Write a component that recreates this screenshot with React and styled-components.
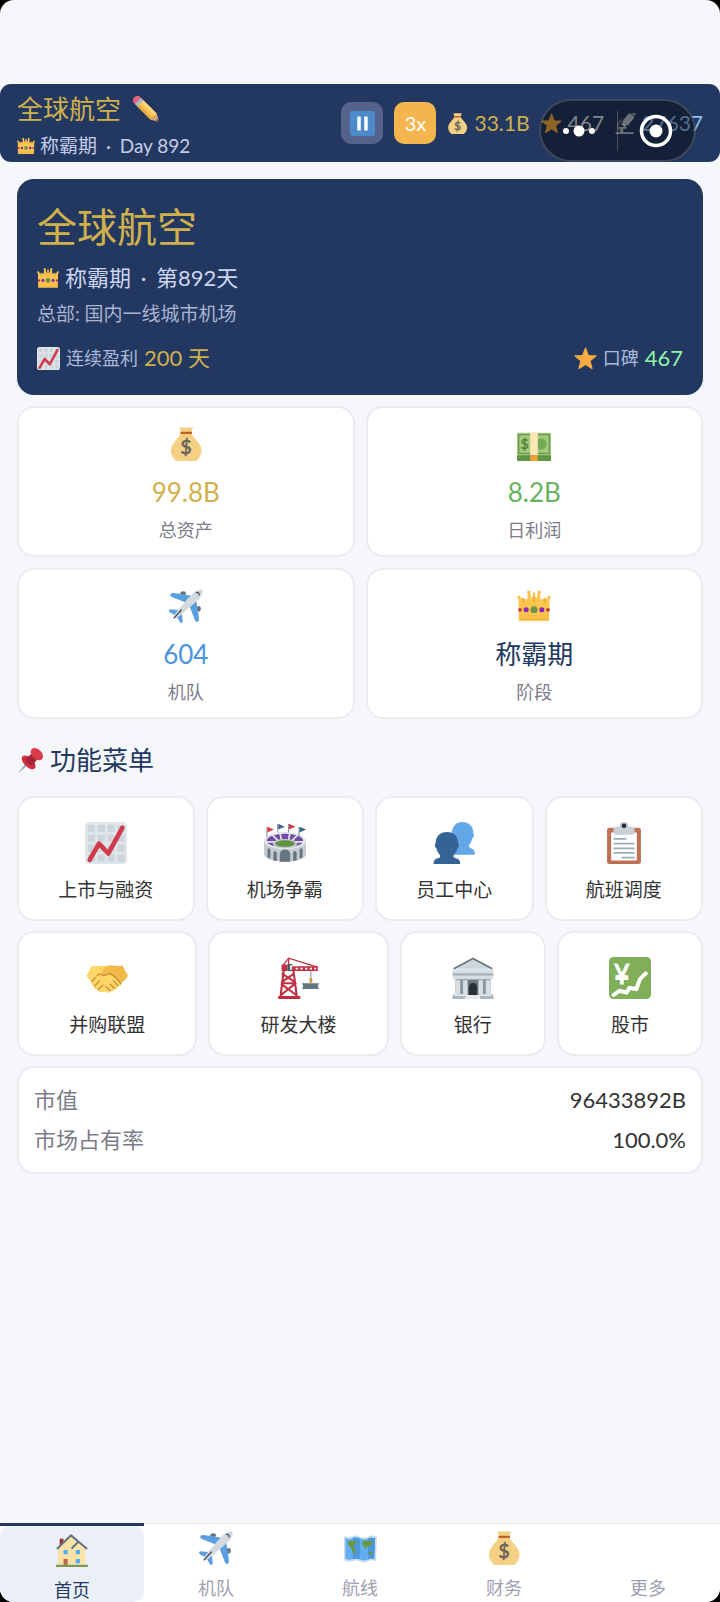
import React from "react";
import styled, { createGlobalStyle, ThemeProvider } from "styled-components";

const theme = {
  navy: "#233861",
  gold: "#cfb04c",
  page: "#f5f7fb",
  line: "#ebecf2",
  muted: "#7c7c89",
  text: "#333333",
};

const GlobalStyle = createGlobalStyle`
  *, *::before, *::after { box-sizing: border-box; }
  html { background: #000; }
  body {
    margin: 0;
    font-family: Lato, "Noto Sans CJK SC", sans-serif;
    font-size: 22px;
    color: ${theme.text};
  }
  h1, h2, p, dl, dd, dt { margin: 0; font-weight: 400; }
  button { font: inherit; color: inherit; border: 0; padding: 0; background: none; cursor: pointer; }
  a { color: inherit; text-decoration: none; }
`;

/* ---------- icons ---------- */

const Icon = styled.svg.attrs({ viewBox: "0 0 36 36", "aria-hidden": true })`
  display: block;
  flex: none;
  width: ${(p) => p.$size}px;
  height: ${(p) => p.$size}px;
`;

const Glyph = styled.text`
  font-family: Lato, sans-serif;
  text-anchor: middle;
`;

const MoneyBag = ({ size }) => (
  <Icon $size={size}>
    <path fill="#f4d083" d="M12.5 7h11c3 6 11 10.500 11 18 0 4-2 8-5.500 11H7.500C4 33 2 29 2 25 2 17.500 9.500 13 12.500 7z" />
    <path fill="#f4d083" d="M11 0l2.500 1L16 0l2.200 1L20.500 0 23 1l2.300-1-1.500 6H12.500z" />
    <rect x="12" y="5" width="12.500" height="2.500" rx="1" fill="#c2602c" />
    <Glyph x="18" y="29" fontSize="21" fill="#67635b" stroke="#67635b" strokeWidth=".6">$</Glyph>
  </Icon>
);

const Cash = ({ size }) => (
  <Icon $size={size}>
    <g transform="translate(0 3)">
      <rect x="0" y="26" width="36" height="7" rx="1" fill="#5f9346" />
      <rect x="0" y="3" width="36" height="24" rx="1" fill="#a3cb7e" />
      <rect x="1.800" y="5" width="32.400" height="20" fill="none" stroke="#6a9a52" strokeWidth="1.400" />
      <circle cx="25.500" cy="15" r="6" fill="#76aa55" />
      <Glyph x="8" y="20.500" fontSize="15" fill="#4f833c" stroke="#4f833c" strokeWidth=".5">$</Glyph>
      <rect x="14" y="3" width="8" height="24" fill="#ffe8b6" />
      <rect x="14" y="27" width="8" height="6" fill="#f3a136" />
    </g>
  </Icon>
);

const Plane = ({ size }) => (
  <Icon $size={size}>
    <ellipse cx="15" cy="4.500" rx="3" ry="2.200" fill="#66757f" />
    <ellipse cx="31.500" cy="21" rx="2.200" ry="3" fill="#66757f" />
    <path fill="#5b9fe0" d="M2.500 4.500C1 5 .8 7.500 2.500 8.300L17 14l6-7L5 4.300z" />
    <path fill="#5b9fe0" d="M31.500 33.500c-.5 1.500-3 1.700-3.800 0L22 19l7-6 2.700 18z" />
    <path fill="#5b9fe0" d="M1.500 21.500c-1.800.2-1.800 2.200-.5 3L8 28.500l4-6z" />
    <path fill="#5b9fe0" d="M14.500 34.500c-.2 1.800-2.200 1.800-3 .5L7.500 28l6-4z" />
    <path fill="#d2d9df" d="M4.800 31.200c-.5-.5 1-4.500 3.200-7L26 3.800C29.500.3 34 0 35.200.8c.8 1.200.5 5.700-3 9.200L11.800 28c-2.500 2.200-6.500 3.700-7 3.200z" />
    <path fill="none" stroke="#3c484f" strokeWidth="1.300" strokeLinecap="round" d="M5.500 30.500l7.500-8.300M29 3.700c1.500-.8 3.500 1 2.900 2.800" />
  </Icon>
);

const Crown = ({ size }) => (
  <Icon $size={size}>
    <path fill="#fbc650" d="M2 34L1.500 9.500 4 9l2.500 4L9 10l2 1.500L11.500 3.500h2L16 11l1-6h2l1 6 2.500-7.500h2l.5 8 2-1.500 2.500 3L32 9l2.500.5L34 34z" />
    <g fill="#f3ad3c">
      <path d="M6.500 15l-1.700-4 1.700-2 1.700 2zM18 15l-2-5 2-3 2 3zM29.500 15l-1.700-4 1.700-2 1.700 2z" />
      <path d="M2 31h32v1.400H2zM2 28h32v.8H2z" />
    </g>
    <g fill="#f7c14d">
      <circle cx="2" cy="8.500" r="1.700" /><circle cx="12.500" cy="3.500" r="1.800" />
      <circle cx="23.500" cy="3.500" r="1.800" /><circle cx="34" cy="8.500" r="1.700" />
      <circle cx="18" cy="5" r="1.500" />
    </g>
    <circle cx="3.200" cy="22" r="2" fill="#c23a3f" /><circle cx="32.800" cy="22" r="2" fill="#c23a3f" />
    <circle cx="9.700" cy="22" r="2.700" fill="#9227b8" /><circle cx="26.300" cy="22" r="2.700" fill="#9227b8" />
    <circle cx="18" cy="22" r="3.800" fill="#6d9447" />
  </Icon>
);

const Star = ({ size }) => (
  <Icon $size={size}>
    <path fill="#f6ac42" stroke="#f6ac42" strokeWidth="2" strokeLinejoin="round" d="M18 2l4.300 11.400 12 .6-9.400 7.500 3.200 12L18 26.800 7.900 33.500l3.200-12L1.700 14l12-.6z" />
  </Icon>
);

const ChartUp = ({ size }) => (
  <Icon $size={size}>
    <rect width="36" height="36" rx="4" fill="#dfe5e9" />
    <g fill="#cdd5dc">
      {[2.5, 11, 19.5, 28].map((x) =>
        [2.5, 11, 19.5, 28].map((y) => <rect key={`${x}-${y}`} x={x} y={y} width="6" height="6" />)
      )}
    </g>
    <path fill="none" stroke="#cf3a4c" strokeWidth="4" strokeLinecap="round" strokeLinejoin="round" d="M4 32.500l8-14 8 8.500L32 5" />
  </Icon>
);

const Pencil = ({ size }) => (
  <Icon $size={size}>
    <g transform="translate(4 4) rotate(45)">
      <rect x="-3" y="-6" width="10" height="12" rx="3.500" fill="#df6277" />
      <rect x="4" y="-6" width="6" height="12" fill="#a9b7c2" />
      <rect x="9" y="-6" width="26" height="12" fill="#f8c555" />
      <rect x="9" y="-6" width="26" height="4" fill="#fbd777" />
      <rect x="9" y="2.500" width="26" height="3.500" fill="#e9a741" />
      <path fill="#d9a778" d="M35-6l8 4.500v3L35 6z" />
      <path fill="#5b5552" d="M41-2.700l3.500 2.200v1L41 2.700z" />
    </g>
  </Icon>
);

const Pushpin = ({ size }) => (
  <Icon $size={size}>
    <g transform="translate(18 18) rotate(45)">
      <path fill="#97a7b5" d="M-2 5h4L0 25z" />
      <ellipse cy="3.500" rx="11.500" ry="6" fill="#cd2f40" />
      <path fill="#a92436" d="M-5-10H5L6.500 3C4 6-4 6-6.500 3z" />
      <ellipse cy="-12" rx="9.500" ry="6.500" fill="#d93b49" />
    </g>
  </Icon>
);

const Stadium = ({ size }) => (
  <Icon $size={size}>
    <path fill="#c5cbd2" d="M0 15h36v13c-3 8-33 8-36 0z" />
    <ellipse cx="18" cy="16" rx="18" ry="7.500" fill="#e3e7eb" />
    <ellipse cx="18" cy="16" rx="15.500" ry="6" fill="#704ba5" />
    <path stroke="#e3e7eb" strokeWidth="1.500" d="M6 10l6 6M13.500 8.500l1.500 7M22.500 8.500l-1.500 7M30 10l-6 6M2 17h32" />
    <ellipse cx="18" cy="18.500" rx="10.500" ry="4" fill="#c5cbd2" />
    <ellipse cx="18" cy="18.500" rx="8.500" ry="2.800" fill="#5f923f" />
    <path fill="#66757f" d="M13.500 34v-6c0-6 9-6 9 0v6zM8 33v-6c0-3 3-3 3 0v6.500zM25 33.500V27c0-3 3-3 3 0v6zM3 30.500V24c0-2 2.500-2 2.500 1v6.500zM30.500 31.500V25c0-3 2.500-3 2.500-1v6.500z" />
    <path stroke="#8b97a0" strokeWidth=".9" d="M2.500 4v9M11.800 1.500V9M21 1.500V9M30 4v9" />
    <path fill="#d63b4d" d="M2.900 4l5.500 2.500-5.500 2.500zM21.400 1.500L27 4l-5.600 2.500z" />
    <path fill="#3b6288" d="M12.200 1.500L17.800 4l-5.600 2.500zM30.400 4l5.600 2.500L30.400 9z" />
  </Icon>
);

const People = ({ size }) => (
  <Icon $size={size}>
    <path fill="#63a7e8" d="M25 0c6 0 9.500 4 9.500 9 0 1.300 1 2 .6 3.200-.3.900-1 1-1.400 1.700-.6 3-1.700 4.400-2.700 5.600-.7 1 0 2.300 1.500 2.900 2.300.9 3.500 2 3.500 5.600H18l-2-18C16 4 20 0 25 0z" />
    <path fill="#356396" d="M12 8.500c6 0 9.500 4 9.500 9.300 0 1 .9 1.400.7 2.700-.2 1-.8 1.500-1.300 1.800-.5 3-1.700 4.500-2.900 5.700-1 1.200-.4 2.600 1.500 3 3 .7 3.800 2 3.800 5H.5c0-3 .8-4.300 3.800-5 1.900-.4 2.500-1.800 1.500-3-1.200-1.200-2.400-2.700-2.900-5.700-.5-.3-1.100-.8-1.300-1.800-.2-1.300.7-1.700.7-2.700C2.300 12.500 6 8.500 12 8.500z" />
  </Icon>
);

const Clipboard = ({ size }) => (
  <Icon $size={size}>
    <rect x="3.500" y="5" width="29" height="31" rx="2" fill="#bd7054" />
    <path fill="#fff" d="M7 9h22v24H7z" />
    <circle cx="18" cy="3.500" r="3.500" fill="#bcc8d0" />
    <rect x="9" y="4" width="18" height="7" rx="2" fill="#c8d1d8" />
    <circle cx="18" cy="3.200" r="2" fill="#292f33" />
    <path stroke="#9aabb8" strokeWidth="1.500" d="M9 14.500h11M9 18.500h18M9 22.500h18M9 26.500h18M16 30.500h11" />
  </Icon>
);

const Handshake = ({ size }) => (
  <Icon $size={size}>
    <path fill="#f1bb49" d="M17 8c5-2 9 1 14-1l5 9c-1.500 3-4 5-6 6l-9 4-9-9z" />
    <path fill="#fcd667" d="M.5 16L5 7.500C9 9 13 6.500 17 8l4 3 9 11c1 2-1 3.500-2.500 2.500.8 2.500-1.700 3.500-3 2.500 0 2-2 3-3.500 2-.5 2-3 2-4.500.5C12 31 10 29 10 28c-2 .5-3.500-1-3-3-2-.2-3-2-2-4-2.500-1-3.500-3.500-4.500-5z" />
    <path fill="#f1bb49" d="M15.500 9.500c4-3.500 9-2 13-.5l4 8-3 5.500c-3-5-6-7.500-9-8.500-2.500 2.500-6 2.500-7 1-.5-1.500 1-4 2-5.500z" />
    <path fill="none" stroke="#c9832f" strokeWidth="1" strokeLinecap="round" d="M9.500 16c1.500-1.800 3-1.500 3.500-1 .8 1.200 4.500 1 7-1 4 1.500 7.500 5.500 10 9M27.500 24.500l-4-4M24.500 27l-4-4M21 29l-4-3.500M5 21l3-3.500M7.500 25l4-4.500M10.500 28l4-4" />
  </Icon>
);

const Crane = ({ size }) => (
  <Icon $size={size}>
    <path fill="none" stroke="#bf2f42" strokeWidth="1.800" d="M5.800 11L3 34M14 11l3 23M4 14l12 8M15 14L3.500 22M3.500 23L17 33M16.500 22L3 33M4 22.500h12" />
    <path fill="none" stroke="#bf2f42" strokeWidth="1.100" d="M4.500 8L10 1l24 7.500M10 1v9" />
    <path fill="#bf2f42" d="M1 33.500h19V36H1zM4 6.500h5V12H4zM12 8h23v4H12z" />
    <path fill="#fff" d="M16 9.300h2v1.500h-2zM20 9.300h2v1.500h-2zM24 9.300h2v1.500h-2zM28 9.300h2v1.500h-2zM32 9.300h1.500v1.500H32z" />
    <path fill="#48545c" d="M9 6h4v6H9z" /><path fill="#d8dfe4" d="M11 7h2v4h-2z" />
    <path stroke="#8f9ca6" strokeWidth="1" d="M29 12v7" />
    <path fill="#d39a3c" d="M27.800 18h2.400v4h-2.400z" />
    <path fill="#66757f" d="M21.500 22.500h14.500l-1 2.500 1 2.500H21.500l1-2.500z" />
  </Icon>
);

const Bank = ({ size }) => (
  <Icon $size={size}>
    <path fill="#ccd6dd" d="M18 1l17 9H1z" />
    <path fill="none" stroke="#66757f" strokeWidth="1.500" d="M1.500 10L18 1.200 34.500 10" />
    <path fill="#8797a3" d="M3 18h30v16H3z" />
    <path fill="#d7dfe5" d="M.5 10.500h35v4h-35zM.5 16h35v3h-35z" /><path fill="#a8b5bf" d="M.5 14h35v2h-35z" />
    <path fill="#d7dfe5" d="M3 20h4v12H3zM9.500 20h4v12h-4zM22.500 20h4v12h-4zM29 20h4v12h-4z" />
    <path fill="#66757f" d="M13.500 20h9v12h-9z" /><path fill="#292f33" d="M14.500 33v-7c0-5 7-5 7 0v7z" />
    <path fill="#aab7c0" d="M1 32h12v4H0zM23 32h12l1 4H23z" /><path fill="#e6ebee" d="M12 32.500h12v3.500H11zM2 32h11v1.500H2zM23 32h11v1.500H23z" />
  </Icon>
);

const YenChart = ({ size }) => (
  <Icon $size={size}>
    <rect width="36" height="36" rx="4" fill="#80ae59" />
    <Glyph x="11" y="23" fontSize="23" fill="#fff" stroke="#fff" strokeWidth="1">¥</Glyph>
    <path fill="none" stroke="#fff" strokeWidth="3.500" strokeLinecap="round" strokeLinejoin="round" d="M4 32.500l5-3.500 6 1.500 2.500-4 6 1 3-8.500 5-5" />
  </Icon>
);

const House = ({ size }) => (
  <Icon $size={size}>
    <path fill="#9d2a38" d="M5 6h4v9H5z" />
    <path fill="#fbe3a8" d="M3 16L17 3l7 7 8 7v16H3z" />
    <path fill="none" stroke="#66757f" strokeWidth="2.200" strokeLinejoin="round" d="M2 17L17 2.500 34 17M17.500 16.500l7-7" />
    <path fill="#55acee" d="M9 18h4.500v4.500H9zM22 18h4.500v4.500H22zM22 27.500h4.500V32H22z" />
    <path fill="#c1694f" d="M9 27.500h4.500V34H9z" />
    <path fill="#7d9b4f" d="M1 33.500h34v3H1z" />
  </Icon>
);

const WorldMap = ({ size }) => (
  <Icon $size={size}>
    <path fill="#c9dceb" d="M1 5c3 2 6 1.500 9 .5s5-1 8 .5 6 1 8.500 0S33 4 36 6l-1 26c-3-1.500-6-1-9 .5s-6 .5-8.500-.5-5-1-7.500 0-6 1-9-1z" />
    <path fill="#62aef0" d="M2.500 7.500c3 1.500 5.500 1 8 0s5-.5 7.500.5 6 1 8.500 0 5-1 7.500-.2l-1 22c-2.500-1-5-.6-7.500.7s-6 .5-8-.5-5.500-1-8-.2-5 .8-7-.3z" />
    <path fill="#4d98d8" d="M10.500 7.500c2.500-1 5-.5 7.500.5v22c-2.500-1-5-1-7.500-.2zM26.500 8c2.500-1 5-1 7.500-.2l-1 22c-2.500-1-4.500-.6-6.500.4z" />
    <path fill="#69983f" d="M5 11c3-1 7-1 9 1 0 2-3 2-3 5 1 2 3 3 1.500 5.500-1 2-1.500 3-2 2 0-4-1-5-2.500-7S4 13 5 11zM20 12c2-2 7-2 11-1 0 3-2 5-3 5-2-1-3 0-3 3-2 0-2-3-4-4zM27 22h4v3h-3z" />
  </Icon>
);

const Microscope = ({ size }) => (
  <Icon $size={size}>
    <path fill="#b9c3cc" d="M1 33h31v3H1zM4 24h16v3H4zM9 27h5v6H9z" />
    <path fill="none" stroke="#66757f" strokeWidth="3.500" d="M12 12c-9 5-9 14-2 20" />
    <g transform="rotate(40 22 12)">
      <rect x="16" y="1" width="12" height="19" rx="2" fill="#b9c3cc" />
      <rect x="18" y="-6" width="8" height="6" fill="#8a96a1" />
      <rect x="18" y="20" width="8" height="5" fill="#ccd6dd" />
    </g>
  </Icon>
);

const PauseIcon = ({ size }) => (
  <Icon $size={size}>
    <rect width="36" height="36" rx="4" fill="#4b8acb" />
    <path fill="#fff" d="M10.500 8h5v20h-5zM20.500 8h5v20h-5z" />
  </Icon>
);

/* ---------- layout ---------- */

const Screen = styled.div`
  position: relative;
  display: flex;
  flex-direction: column;
  min-height: 100vh;
  padding-top: 84px;
  border-radius: 14px;
  overflow: hidden;
  background: ${(p) => p.theme.page};
`;

const TopBar = styled.header`
  display: flex;
  align-items: center;
  justify-content: space-between;
  height: 78px;
  padding: 0 17px;
  border-radius: 11px;
  background: ${(p) => p.theme.navy};
`;

const Brand = styled.div`
  display: flex;
  flex-direction: column;
  gap: 6px;
  padding-top: 4px;
`;

const BrandName = styled.div`
  display: flex;
  align-items: center;
  gap: 12px;
  font-size: 26px;
  line-height: 36px;
  color: ${(p) => p.theme.gold};
`;

const Inline = styled.p`
  display: flex;
  align-items: center;
  gap: ${(p) => p.$gap || 6}px;
  font-size: ${(p) => p.$size}px;
  line-height: ${(p) => p.$line}px;
  color: ${(p) => p.$color};
  white-space: pre;
`;

const Dot = styled.span`
  margin: 0 4px;
`;

const Tools = styled.div`
  display: flex;
  align-items: center;
  gap: 11px;
`;

const ToolButton = styled.button`
  display: grid;
  place-items: center;
  width: 42px;
  height: 42px;
  border-radius: 10px;
  font-size: 20px;
  color: #fff;
  background: ${(p) => (p.$active ? "#f4b54e" : "#55628a")};
`;

const Capsule = styled.div`
  position: absolute;
  top: 99px;
  right: 24px;
  display: grid;
  grid-template-columns: 1fr 1px 1fr;
  align-items: center;
  width: 157px;
  height: 63px;
  border: 2px solid rgba(255, 255, 255, 0.18);
  border-radius: 32px;
  background: rgba(0, 0, 0, 0.42);
`;

const CapsuleButton = styled.button`
  display: grid;
  place-items: center;
  height: 100%;
`;

const CapsuleDivider = styled.span`
  height: 40px;
  background: rgba(255, 255, 255, 0.22);
`;

const Content = styled.main`
  display: flex;
  flex-direction: column;
  padding: 17px 17px 40px;
`;

const Hero = styled.section`
  padding: 20px;
  border-radius: 17px;
  background: ${(p) => p.theme.navy};
`;

const HeroTitle = styled.h1`
  margin-bottom: 6px;
  font-size: 40px;
  line-height: 57px;
  color: ${(p) => p.theme.gold};
`;

const HeroNote = styled.p`
  margin: 7px 0 14px;
  font-size: 19px;
  line-height: 26px;
  color: #aab4d2;
`;

const HeroFoot = styled.div`
  display: flex;
  justify-content: space-between;
`;

const Strong = styled.span`
  font-size: 22px;
  color: ${(p) => p.$color};
`;

const StatGrid = styled.section`
  display: grid;
  grid-template-columns: 1fr 1fr;
  gap: 11px;
  margin-top: 11px;
`;

const Card = styled.div`
  border: 2px solid ${(p) => p.theme.line};
  border-radius: 17px;
  background: #fff;
`;

const StatCard = styled(Card)`
  display: flex;
  flex-direction: column;
  align-items: center;
  padding: 19px 10px 12px;
`;

const StatValue = styled.p`
  margin: 13px 0 7px;
  font-size: 26px;
  line-height: 36px;
  color: ${(p) => p.$color};
`;

const StatLabel = styled.p`
  font-size: 18px;
  line-height: 26px;
  color: ${(p) => p.theme.muted};
`;

const SectionTitle = styled.h2`
  display: flex;
  align-items: center;
  gap: 6px;
  margin: 22px 0 17px;
  font-size: 26px;
  line-height: 38px;
  color: ${(p) => p.theme.navy};
`;

const MenuGrid = styled.section`
  display: flex;
  flex-wrap: wrap;
  gap: 10px 11px;
`;

const MenuCard = styled(Card).attrs({ as: "button", type: "button" })`
  display: flex;
  flex: 1 1 auto;
  flex-direction: column;
  align-items: center;
  gap: 13px;
  padding: 24px 30px 16px;
  border: 2px solid ${(p) => p.theme.line};
  font-size: 19px;
  line-height: 26px;
  color: ${(p) => p.theme.text};
  background: #fff;
`;

const InfoCard = styled(Card).attrs({ as: "dl" })`
  margin-top: 10px;
  padding: 12px 15px;
`;

const InfoRow = styled.div`
  display: flex;
  justify-content: space-between;
  line-height: 40px;

  dt { color: ${(p) => p.theme.muted}; }
`;

const TabBar = styled.nav`
  display: grid;
  grid-template-columns: repeat(5, 1fr);
  margin-top: auto;
  background: #fff;
`;

const Tab = styled.a`
  display: flex;
  height: 79px;
  border-top: ${(p) => (p.$active ? `3px solid ${p.theme.navy}` : `1px solid ${p.theme.line}`)};
  font-size: 18px;
  line-height: 24px;
  color: ${(p) => (p.$active ? p.theme.navy : "#a0a1ae")};
`;

const TabBody = styled.span`
  display: flex;
  flex: 1;
  flex-direction: column;
  align-items: center;
  gap: 11px;
  padding-top: 7px;
  border-radius: 11px;
  background: ${(p) => (p.$active ? "#eaeff8" : "transparent")};
`;

const EmptyIcon = styled.span`
  height: 34px;
`;

const stats = [
  { icon: MoneyBag, value: "99.8B", label: "总资产", color: theme.gold },
  { icon: Cash, value: "8.2B", label: "日利润", color: "#66b260" },
  { icon: Plane, value: "604", label: "机队", color: "#4c93e0" },
  { icon: Crown, value: "称霸期", label: "阶段", color: theme.navy },
];

const menu = [
  { icon: ChartUp, label: "上市与融资" },
  { icon: Stadium, label: "机场争霸" },
  { icon: People, label: "员工中心" },
  { icon: Clipboard, label: "航班调度" },
  { icon: Handshake, label: "并购联盟" },
  { icon: Crane, label: "研发大楼" },
  { icon: Bank, label: "银行" },
  { icon: YenChart, label: "股市" },
];

const tabs = [
  { icon: House, label: "首页", active: true },
  { icon: Plane, label: "机队" },
  { icon: WorldMap, label: "航线" },
  { icon: MoneyBag, label: "财务" },
  { label: "更多" },
];

export default function App() {
  return (
    <ThemeProvider theme={theme}>
      <GlobalStyle />
      <Screen>
        <TopBar>
          <Brand>
            <BrandName>
              全球航空
              <button type="button" aria-label="编辑名称"><Pencil size={26} /></button>
            </BrandName>
            <Inline $size={19} $line={26} $gap={5} $color="#c3cde9">
              <Crown size={18} />
              <span>称霸期 <Dot>·</Dot> Day 892</span>
            </Inline>
          </Brand>
          <Tools>
            <ToolButton type="button" aria-label="暂停"><PauseIcon size={25} /></ToolButton>
            <ToolButton type="button" $active>3x</ToolButton>
            <Inline $size={21} $line={32} $color={theme.gold}><MoneyBag size={21} />33.1B</Inline>
            <Inline $size={21} $line={32} $color="#dfe4ee"><Star size={21} />467</Inline>
            <Inline $size={21} $line={32} $color="#8fc0f0"><Microscope size={21} />27637</Inline>
          </Tools>
        </TopBar>
        <Capsule>
          <CapsuleButton type="button" aria-label="更多操作">
            <svg width="34" height="12" viewBox="0 0 34 12" fill="#fff" aria-hidden="true">
              <circle cx="4" cy="6" r="3" /><circle cx="17" cy="6" r="5.500" /><circle cx="30" cy="6" r="3" />
            </svg>
          </CapsuleButton>
          <CapsuleDivider />
          <CapsuleButton type="button" aria-label="关闭">
            <svg width="34" height="34" viewBox="0 0 34 34" aria-hidden="true">
              <circle cx="17" cy="17" r="14.500" fill="none" stroke="#fff" strokeWidth="3.500" />
              <circle cx="17" cy="17" r="6.500" fill="#fff" />
            </svg>
          </CapsuleButton>
        </Capsule>

        <Content>
          <Hero>
            <HeroTitle>全球航空</HeroTitle>
            <Inline $size={22} $line={32} $color="#cbd5f0">
              <Crown size={22} />
              <span>称霸期 <Dot>·</Dot> 第892天</span>
            </Inline>
            <HeroNote>总部: 国内一线城市机场</HeroNote>
            <HeroFoot>
              <Inline $size={18} $line={34} $color="#aab8dc">
                <ChartUp size={23} />连续盈利<Strong $color={theme.gold}>200 天</Strong>
              </Inline>
              <Inline $size={18} $line={34} $color="#aab8dc">
                <Star size={23} />口碑<Strong $color="#8df5a6">467</Strong>
              </Inline>
            </HeroFoot>
          </Hero>

          <StatGrid>
            {stats.map(({ icon: StatIcon, value, label, color }) => (
              <StatCard key={label}>
                <StatIcon size={34} />
                <StatValue $color={color}>{value}</StatValue>
                <StatLabel>{label}</StatLabel>
              </StatCard>
            ))}
          </StatGrid>

          <SectionTitle><Pushpin size={27} />功能菜单</SectionTitle>
          <MenuGrid>
            {menu.map(({ icon: MenuIcon, label }) => (
              <MenuCard key={label}><MenuIcon size={42} />{label}</MenuCard>
            ))}
          </MenuGrid>

          <InfoCard>
            <InfoRow><dt>市值</dt><dd>96433892B</dd></InfoRow>
            <InfoRow><dt>市场占有率</dt><dd>100.0%</dd></InfoRow>
          </InfoCard>
        </Content>

        <TabBar>
          {tabs.map(({ icon: TabIcon, label, active }) => (
            <Tab key={label} href="#" $active={active} aria-current={active ? "page" : undefined}>
              <TabBody $active={active}>
                {TabIcon ? <TabIcon size={34} /> : <EmptyIcon />}
                <span>{label}</span>
              </TabBody>
            </Tab>
          ))}
        </TabBar>
      </Screen>
    </ThemeProvider>
  );
}
